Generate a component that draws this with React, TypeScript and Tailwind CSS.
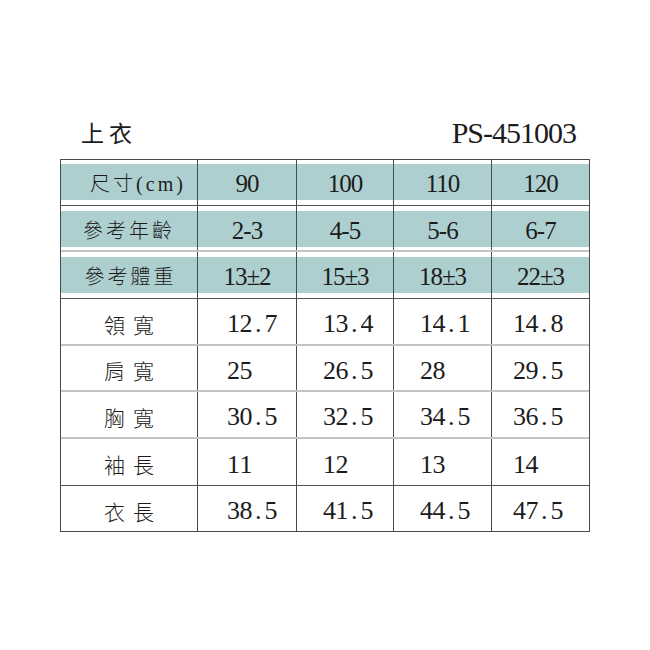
import React from "react";

const SERIF = "font-['Liberation_Serif','Noto_Sans_CJK_TC',serif]";
const CJK = "font-['Noto_Sans_CJK_TC','Noto_Sans_CJK_SC',sans-serif]";

function Mono({ text, cell }: { text: string; cell: string }) {
  return (
    <span className="inline-flex">
      {[...text].map((c, i) => (
        <span key={i} className={`inline-block text-center ${cell}`}>
          {c}
        </span>
      ))}
    </span>
  );
}

const colW = [
  "w-[137px] border-r border-[#4a4a4a]",
  "w-[99px] border-r border-[#4a4a4a]",
  "w-[97px] border-r border-[#4a4a4a]",
  "w-[98px] border-r border-[#4a4a4a]",
  "w-[97px]",
];

type HRow = {
  label: string;
  labelPad: string;
  vals: string[];
  row: string;
  pt: string;
};

const headerRows: HRow[] = [
  {
    label: "尺寸(cm)",
    labelPad: "pl-[18px]",
    vals: ["90", "100", "110", "120"],
    row: "h-[46px] border-b border-[#555]",
    pt: "pt-[4px]",
  },
  {
    label: "參考年齡",
    labelPad: "pl-[0px]",
    vals: ["2-3", "4-5", "5-6", "6-7"],
    row: "h-[46px] border-b-2 border-[#c4c4c4]",
    pt: "pt-[5px]",
  },
  {
    label: "參考體重",
    labelPad: "pl-[3px]",
    vals: ["13±2", "15±3", "18±3", "22±3"],
    row: "h-[47px] border-b border-[#555]",
    pt: "pt-[5px]",
  },
];

type BRow = { label: string; vals: string[]; row: string };

const bodyRows: BRow[] = [
  { label: "領寬", vals: ["12.7", "13.4", "14.1", "14.8"], row: "h-[47px] border-b-2 border-[#c4c4c4]" },
  { label: "肩寬", vals: ["25", "26.5", "28", "29.5"], row: "h-[46px] border-b-2 border-[#c4c4c4]" },
  { label: "胸寬", vals: ["30.5", "32.5", "34.5", "36.5"], row: "h-[47px] border-b-2 border-[#c4c4c4]" },
  { label: "袖長", vals: ["11", "12", "13", "14"], row: "h-[47px] border-b border-[#555]" },
  { label: "衣長", vals: ["38.5", "41.5", "44.5", "47.5"], row: "h-[46px] border-b border-[#4a4a4a]" },
];

const bodyPad = ["pl-[29px]", "pl-[26px]", "pl-[26px]", "pl-[21px]"];

export default function App() {
  return (
    <div className="w-[650px] h-[650px] bg-white pt-[112px] pl-[60px] text-[#1c1c1c]">
      <div className="w-[530px] h-[47px] flex items-center justify-between pl-[21px] pr-[14px] pb-[6px]">
        <span className={`${CJK} text-[23px] leading-none tracking-[5px]`}>上衣</span>
        <span className={`${SERIF} text-[30px] leading-none tracking-[-1px]`}>PS-451003</span>
      </div>
      <div className="w-[530px] border-t border-l border-r border-[#4a4a4a]">
        {headerRows.map((r, ri) => (
          <div key={ri} className={`flex ${r.row}`}>
            {colW.map((cw, ci) => (
              <div key={ci} className={`${cw} h-full ${r.pt}`}>
                <div className="h-[36px] bg-[#aecfd0] flex items-center justify-center pt-[3px]">
                  {ci === 0 ? (
                    <span className={`${SERIF} ${r.labelPad} text-[20px] font-light leading-none tracking-[3px]`}>{r.label}</span>
                  ) : (
                    <span className={`${SERIF} text-[25px] leading-none tracking-[-1px]`}>{r.vals[ci - 1]}</span>
                  )}
                </div>
              </div>
            ))}
          </div>
        ))}
        {bodyRows.map((r, ri) => (
          <div key={ri} className={`flex ${r.row}`}>
            {colW.map((cw, ci) => (
              <div
                key={ci}
                className={`${cw} h-full flex items-center pt-[5px] ${ci === 0 ? "justify-center" : bodyPad[ci - 1]}`}
              >
                {ci === 0 ? (
                  <span className={`${CJK} font-light text-[21px] leading-none tracking-[8px] pl-[8px]`}>{r.label}</span>
                ) : (
                  <span className={`${SERIF} text-[26px] leading-none`}>
                    <Mono text={r.vals[ci - 1]} cell="w-[12.5px]" />
                  </span>
                )}
              </div>
            ))}
          </div>
        ))}
      </div>
    </div>
  );
}
